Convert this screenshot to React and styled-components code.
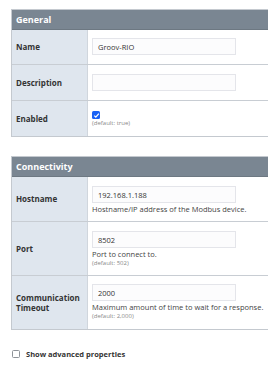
import React from "react";
import styled, { createGlobalStyle } from "styled-components";

const Global = createGlobalStyle`
  html, body { margin: 0; padding: 0; background: #fff; overflow: hidden; }
  body { font-family: "Open Sans", "Noto Sans", sans-serif; color: #333; }
  * { box-sizing: border-box; }
`;

const Page = styled.div`
  width: 268px;
  height: 369px;
  overflow: hidden;
  padding: 9px 0 0 11px;
`;

const Section = styled.div`
  width: 300px;
  border: 1px solid #c4c9cf;
  margin-bottom: ${(p) => p.$gap || 0}px;
`;

const Header = styled.div`
  height: 20px;
  background: #7a8692;
  border-bottom: 1px solid #6d7882;
  color: #fff;
  font-weight: 700;
  font-size: 9px;
  display: flex;
  align-items: center;
  padding-left: 4px;
`;

const Row = styled.div`
  display: grid;
  grid-template-columns: 76px 1fr;
  min-height: ${(p) => p.$h}px;
  border-top: ${(p) => (p.$first ? "none" : "1px solid #c8cdd3")};
`;

const Label = styled.div`
  background: #dfe6ee;
  border-right: 1px solid #d0d6dd;
  font-weight: 700;
  font-size: 8px;
  line-height: 10px;
  color: #333;
  display: flex;
  align-items: center;
  padding-left: 4px;
`;

const Value = styled.div`
  padding: ${(p) => p.$pt ?? 8}px 0 0 4px;
  display: flex;
  flex-direction: column;
  align-items: flex-start;
`;

const Input = styled.div`
  width: 144px;
  height: 17px;
  border: 1px solid #e4e5ea;
  background: #fcfcfd;
  font-size: 7.5px;
  color: #333;
  display: flex;
  align-items: center;
  padding-left: 5px;
`;

const Help = styled.div`
  font-size: 7.5px;
  line-height: 10px;
  color: #444;
  margin-top: 1px;
  white-space: nowrap;
`;

const Default = styled.div`
  font-size: 6px;
  line-height: 9px;
  color: #888;
`;

const Check = styled.span`
  width: 8px;
  height: 8px;
  border-radius: 1.5px;
  background: ${(p) => (p.$on ? "#1a62f5" : "#fff")};
  border: ${(p) => (p.$on ? "none" : "1px solid #8e9399")};
  display: inline-flex;
  align-items: center;
  justify-content: center;
`;

const Footer = styled.div`
  display: flex;
  align-items: center;
  gap: 6px;
  margin-top: 19px;
  padding-left: 1px;
  font-size: 7.5px;
  font-weight: 700;
  color: #333;
`;

const Tick = () => (
  <svg width="7" height="7" viewBox="0 0 10 10">
    <path d="M1.8 5.2 L4 7.4 L8.4 2.4" fill="none" stroke="#fff" strokeWidth="1.8" />
  </svg>
);

export default function App() {
  return (
    <>
      <Global />
      <Page>
        <Section $gap={19}>
          <Header>General</Header>
          <Row $first $h={34}>
            <Label>Name</Label>
            <Value><Input>Groov-RIO</Input></Value>
          </Row>
          <Row $h={36}>
            <Label>Description</Label>
            <Value $pt={9}><Input /></Value>
          </Row>
          <Row $h={36}>
            <Label>Enabled</Label>
            <Value $pt={10}>
              <Check $on><Tick /></Check>
              <Default>(default: true)</Default>
            </Value>
          </Row>
        </Section>
        <Section>
          <Header>Connectivity</Header>
          <Row $first $h={44}>
            <Label>Hostname</Label>
            <Value $pt={9}>
              <Input>192.168.1.188</Input>
              <Help>Hostname/IP address of the Modbus device.</Help>
            </Value>
          </Row>
          <Row $h={54}>
            <Label>Port</Label>
            <Value $pt={9}>
              <Input>8502</Input>
              <Help>Port to connect to.</Help>
              <Default>(default: 502)</Default>
            </Value>
          </Row>
          <Row $h={54}>
            <Label>Communication<br />Timeout</Label>
            <Value $pt={8}>
              <Input>2000</Input>
              <Help>Maximum amount of time to wait for a response.</Help>
              <Default>(default: 2,000)</Default>
            </Value>
          </Row>
        </Section>
        <Footer>
          <Check />
          Show advanced properties
        </Footer>
      </Page>
    </>
  );
}
